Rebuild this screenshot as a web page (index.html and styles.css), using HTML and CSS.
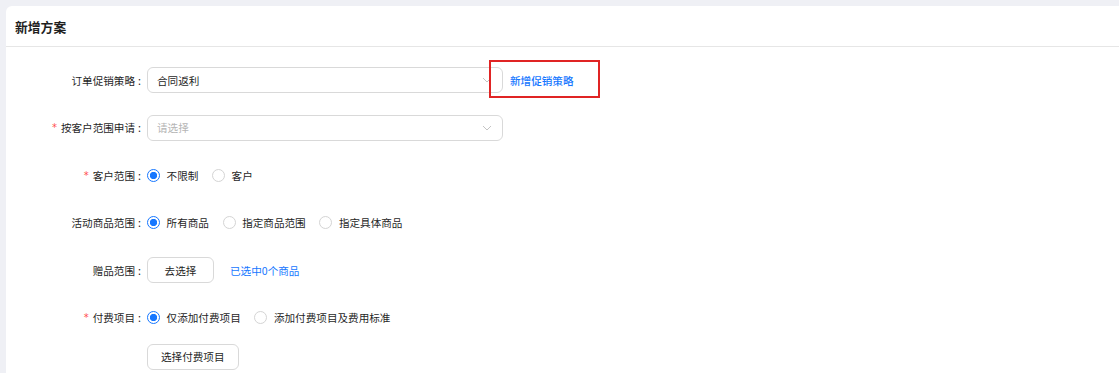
FILE: index.html
```html
<html>
  <head>
    <title>新增方案</title>
    <link rel="stylesheet" href="styles.css">
  </head>
  <body>
    <div class="page">
      <div class="card">
        <div class="card-header">新增方案</div>

        <div class="card-body">

          <div class="form-row">
            <div class="form-label">订单促销策略</div>
            <div class="form-control">
              <div class="inline">
                <div class="select">
                  <span class="select-value">合同返利</span>
                  <svg class="chevron" width="10" height="6" viewBox="0 0 10 6"><path d="M1 1 L5 5 L9 1" fill="none" stroke="#c4c4c4" stroke-width="1"/></svg>
                </div>
                <a class="link strong" href="#">新增促销策略</a>
                <div class="highlight"></div>
              </div>
            </div>
          </div>

          <div class="form-row">
            <div class="form-label required">按客户范围申请</div>
            <div class="form-control">
              <div class="select">
                <span class="select-placeholder">请选择</span>
                <svg class="chevron" width="10" height="6" viewBox="0 0 10 6"><path d="M1 1 L5 5 L9 1" fill="none" stroke="#c4c4c4" stroke-width="1"/></svg>
              </div>
            </div>
          </div>

          <div class="form-row">
            <div class="form-label required">客户范围</div>
            <div class="form-control">
              <label class="radio checked"><span class="radio-dot"></span><span class="radio-text">不限制</span></label>
              <label class="radio"><span class="radio-dot"></span><span class="radio-text">客户</span></label>
            </div>
          </div>

          <div class="form-row">
            <div class="form-label">活动商品范围</div>
            <div class="form-control">
              <label class="radio checked"><span class="radio-dot"></span><span class="radio-text">所有商品</span></label>
              <label class="radio"><span class="radio-dot"></span><span class="radio-text">指定商品范围</span></label>
              <label class="radio"><span class="radio-dot"></span><span class="radio-text">指定具体商品</span></label>
            </div>
          </div>

          <div class="form-row">
            <div class="form-label">赠品范围</div>
            <div class="form-control">
              <button class="btn btn-wide">去选择</button>
              <a class="link gift-link" href="#">已选中0个商品</a>
            </div>
          </div>

          <div class="form-row last">
            <div class="form-label required">付费项目</div>
            <div class="form-control column">
              <div class="radio-group">
                <label class="radio checked"><span class="radio-dot"></span><span class="radio-text">仅添加付费项目</span></label>
                <label class="radio"><span class="radio-dot"></span><span class="radio-text">添加付费项目及费用标准</span></label>
              </div>
              <button class="btn">选择付费项目</button>
            </div>
          </div>

        </div>
      </div>
    </div>
  </body>
</html>
```

FILE: styles.css
```css
body {
  margin: 0px;
  background-color: #eff0f5;
  font-family: "Noto Sans CJK SC", "Noto Sans", sans-serif;
  font-size: 10.6px;
  color: #1f1f1f;
  overflow: hidden;
}

.page {
  padding: 6px 0px 0px 6px;
}

.card {
  background-color: #ffffff;
  border-top-left-radius: 6px;
  height: calc(100vh - 6px);
  overflow: hidden;
}

.card-header {
  height: 40px;
  display: flex;
  align-items: center;
  padding-left: 9px;
  font-size: 12.8px;
  font-weight: bold;
  border-bottom: 1px solid #e6e6e6;
}

.card-body {
  padding-top: 20px;
}

.form-row {
  display: flex;
  align-items: flex-start;
  margin-bottom: 21.6px;
}

.form-row.last {
  margin-bottom: 0px;
}

.form-label {
  width: 135px;
  height: 26px;
  display: flex;
  align-items: center;
  justify-content: flex-end;
  flex-shrink: 0;
}

.form-label::after {
  content: ":";
  margin-left: 3px;
}

.required::before {
  content: "*";
  color: #ff4d4f;
  margin-right: 4px;
  font-family: "DejaVu Sans", sans-serif;
  font-size: 10px;
}

.form-control {
  margin-left: 6px;
  min-height: 26px;
  display: flex;
  align-items: center;
}

.form-control.column {
  flex-direction: column;
  align-items: flex-start;
}

.radio-group {
  height: 26px;
  display: flex;
  align-items: center;
  margin-bottom: 13px;
}

.inline {
  position: relative;
  display: flex;
  align-items: center;
}

.select {
  width: 356px;
  height: 26px;
  box-sizing: border-box;
  border: 1px solid #d9d9d9;
  border-radius: 6px;
  display: flex;
  align-items: center;
  justify-content: space-between;
  padding: 0px 10px 0px 9px;
}

.select-placeholder {
  color: #b5b5b5;
}

.chevron {
  display: block;
}

.link {
  color: #1677ff;
  text-decoration: none;
}

.strong {
  font-weight: 500;
  margin-left: 7px;
}

.highlight {
  position: absolute;
  left: 342px;
  top: -7px;
  width: 111px;
  height: 38px;
  box-sizing: border-box;
  border: 2px solid #e02424;
}

.radio {
  display: flex;
  align-items: center;
  margin-right: 7px;
}

.radio-dot {
  width: 13px;
  height: 13px;
  box-sizing: border-box;
  border: 1px solid #d4d4d4;
  border-radius: 50%;
  background-color: #ffffff;
}

.radio.checked .radio-dot {
  border: 1px solid #1677ff;
  background-color: #ffffff;
  background-image: radial-gradient(circle, #1677ff 0px, #1677ff 3.4px, transparent 3.9px);
}

.radio-text {
  padding: 0px 6.6px;
}

.btn {
  height: 26px;
  padding: 0px 13px;
  background-color: #ffffff;
  border: 1px solid #d9d9d9;
  border-radius: 6px;
  font-family: inherit;
  font-size: 10.6px;
  color: #1f1f1f;
}

.btn-wide {
  width: 67px;
}

.gift-link {
  margin-left: 16px;
}
```
